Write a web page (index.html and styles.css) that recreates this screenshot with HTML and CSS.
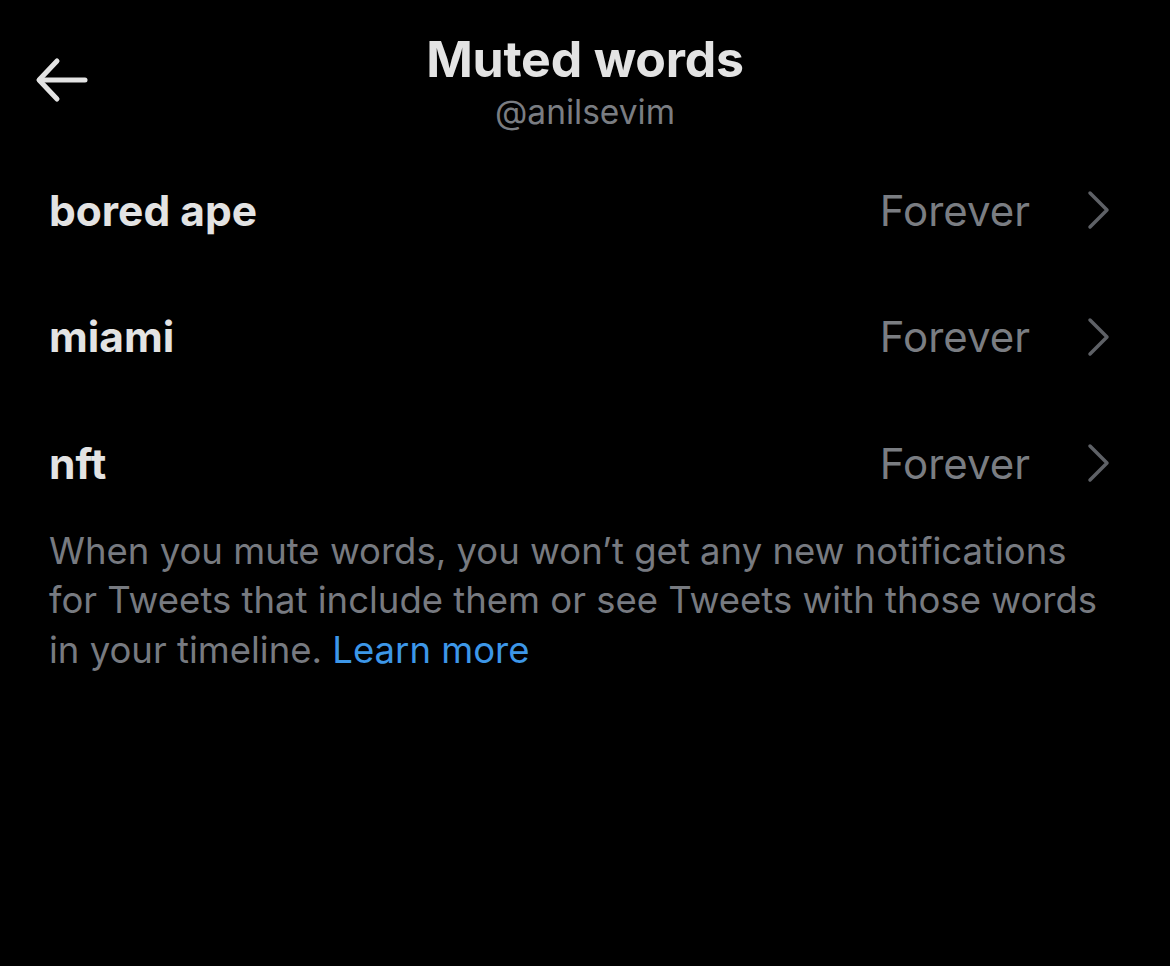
FILE: index.html
```html
<!DOCTYPE html>
<html lang="en">
<head>
<meta charset="utf-8">
<title>Muted words</title>
<link rel="stylesheet" href="styles.css">
</head>
<body>
<div class="screen">
  <header class="header">
    <button class="back" aria-label="Back">
      <svg width="54" height="46" viewBox="0 0 54 46" fill="none" stroke="currentColor" stroke-width="5" stroke-linecap="round" stroke-linejoin="round">
        <path d="M50 23H5"/>
        <path d="M22 4L4 23L22 42"/>
      </svg>
    </button>
    <div class="titles">
      <h1 class="title">Muted words</h1>
      <div class="handle">@anilsevim</div>
    </div>
  </header>
  <ul class="list">
    <li class="row"><span class="word">bored ape</span><span class="dur">Forever</span><svg class="chev" width="24" height="40" viewBox="0 0 24 40" fill="none" stroke="currentColor" stroke-width="3.5" stroke-linecap="round" stroke-linejoin="round"><path d="M4 3L21 20L4 37"/></svg></li>
    <li class="row"><span class="word">miami</span><span class="dur">Forever</span><svg class="chev" width="24" height="40" viewBox="0 0 24 40" fill="none" stroke="currentColor" stroke-width="3.5" stroke-linecap="round" stroke-linejoin="round"><path d="M4 3L21 20L4 37"/></svg></li>
    <li class="row"><span class="word">nft</span><span class="dur">Forever</span><svg class="chev" width="24" height="40" viewBox="0 0 24 40" fill="none" stroke="currentColor" stroke-width="3.5" stroke-linecap="round" stroke-linejoin="round"><path d="M4 3L21 20L4 37"/></svg></li>
  </ul>
  <p class="note">When you mute words, you won’t get any new notifications for Tweets that include them or see Tweets with those words in your timeline. <a class="link" href="#">Learn more</a></p>
</div>
</body>
</html>
```
FILE: styles.css
```css
html, body {
  margin: 0;
  padding: 0;
  background: #000;
}
body {
  font-family: Inter, "Noto Sans", "Liberation Sans", sans-serif;
  color: #e7e9ea;
}
.screen {
  width: 1170px;
  height: 966px;
  background: #000;
}
.header {
  position: relative;
  height: 147px;
  display: flex;
  justify-content: center;
}
.back {
  position: absolute;
  left: 35px;
  top: 57px;
  padding: 0;
  border: 0;
  background: none;
  color: #e3e3e3;
  display: flex;
}
.titles {
  display: flex;
  flex-direction: column;
  align-items: center;
  padding-top: 26px;
}
.title {
  margin: 0;
  font-size: 50px;
  font-weight: 700;
  line-height: 66px;
  color: #e3e3e3;
  letter-spacing: -0.2px;
}
.handle {
  font-size: 33.5px;
  line-height: 40px;
  color: #7a7d82;
}
.list {
  list-style: none;
  margin: 0;
  padding: 0;
}
.row {
  height: 126.6px;
  display: flex;
  align-items: center;
  padding: 0 60px 0 49px;
}
.word {
  flex: 1;
  font-size: 42.5px;
  font-weight: 700;
  color: #e3e3e3;
}
.dur {
  font-size: 42px;
  color: #7a7d82;
  margin-right: 56px;
}
.chev {
  color: #5e6166;
}
.note {
  margin: 0 0 0 49px;
  width: 1062px;
  font-size: 36.5px;
  line-height: 49.5px;
  color: #777a80;
}
.link {
  color: #3d97e8;
  text-decoration: none;
}
```
